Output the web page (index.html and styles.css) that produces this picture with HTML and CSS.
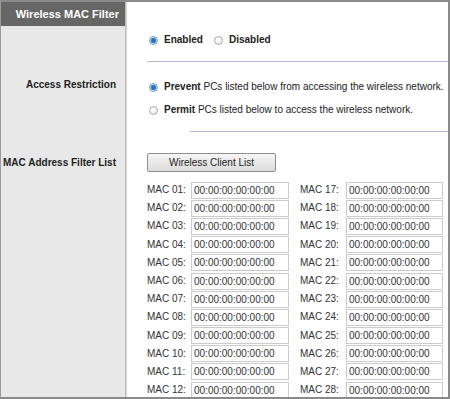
FILE: index.html
```html
<!DOCTYPE html>
<html lang="en">
<head>
  <meta charset="UTF-8" />
  <title>Wireless MAC Filter</title>
  <link rel="stylesheet" href="styles.css">
</head>
<body>
  <div class="frame">
    <div class="side">
      <div class="side-title">Wireless MAC Filter</div>
      <div class="side-label lbl-access">Access Restriction</div>
      <div class="side-label lbl-list">MAC Address Filter List</div>
    </div>

    <div class="main">
      <div class="row-enable">
        <label class="radio"><span class="dot on"></span><b>Enabled</b></label>
        <label class="radio"><span class="dot"></span><b>Disabled</b></label>
      </div>
      <hr class="line line-a">

      <div class="row-access">
        <label class="radio"><span class="dot on"></span><b>Prevent</b>&nbsp;PCs listed below from accessing the wireless network.</label>
        <label class="radio"><span class="dot"></span><b>Permit</b>&nbsp;PCs listed below to access the wireless network.</label>
      </div>
      <hr class="line line-b">

      <button class="client-btn">Wireless Client List</button>

      <div class="mac-grid" id="macGrid"></div>
    </div>
  </div>

  <script>
    const grid = document.getElementById('macGrid');
    function pad(n) { return n < 10 ? '0' + n : '' + n; }
    for (let i = 1; i <= 12; i++) {
      [i, i + 16].forEach(n => {
        const lab = document.createElement('span');
        lab.className = 'mac-label';
        lab.textContent = 'MAC ' + pad(n) + ':';
        const inp = document.createElement('input');
        inp.className = 'mac-input';
        inp.value = '00:00:00:00:00:00';
        grid.appendChild(lab);
        grid.appendChild(inp);
      });
    }
  </script>
</body>
</html>
```

FILE: styles.css
```css
* {
  box-sizing: border-box;
}
body {
  margin: 0;
  font-family: 'Liberation Sans', Arial, sans-serif;
  font-size: 10px;
  line-height: 12px;
  color: #222;
}
.frame {
  width: 450px;
  height: 399px;
  display: flex;
  border-top: 2px solid #8a8a8a;
  border-right: 2px solid #8a8a8a;
  border-bottom: 2px solid #8a8a8a;
  border-left: 1px solid #9a9a9a;
  overflow: hidden;
  background: #fff;
}
.side {
  width: 125px;
  flex: none;
  background: #e8e8e8;
  border-right: 1px solid #bdbdbd;
  box-shadow: 1px 0 1px #d8d8d8;
}
.side-title {
  background: #666;
  color: #fff;
  font-weight: bold;
  font-size: 11px;
  height: 24px;
  line-height: 24px;
  text-align: right;
  padding-right: 6px;
}
.side-label {
  font-weight: bold;
  text-align: right;
  white-space: nowrap;
  padding-right: 9px;
}
.lbl-access {
  margin-top: 53px;
}
.lbl-list {
  margin-top: 66px;
}
.main {
  flex: 1;
  padding: 0 0 0 21px;
}
.radio {
  display: flex;
  align-items: center;
  white-space: nowrap;
}
.dot {
  width: 9px;
  height: 9px;
  border-radius: 50%;
  border: 1px solid #a8a8a8;
  background: radial-gradient(circle at 40% 35%, #fff, #e4e4e4);
  margin: 0 6px 0 2px;
  flex: none;
}
.dot.on {
  border-color: #7a9ab8;
  background: radial-gradient(circle at 50% 50%, #2b6fb3 0 2px, #bcd4ea 3px, #fff 5px);
}
.row-enable {
  display: flex;
  align-items: flex-start;
  gap: 9px;
  padding-top: 32px;
  height: 59px;
}
.line {
  border: none;
  border-top: 1px solid #b4b4dc;
  margin: 0;
}
.line-b {
  margin-left: 43px;
}
.row-access {
  display: flex;
  flex-direction: column;
  gap: 11px;
  padding: 19px 0 15px;
}
.client-btn {
  display: block;
  margin-top: 21px;
  width: 129px;
  height: 19px;
  font-family: inherit;
  font-size: 10px;
  color: #222;
  border: 1px solid #8e8e8e;
  border-radius: 2px;
  background: linear-gradient(#f6f6f6, #dcdcdc);
  padding: 0;
}
.mac-grid {
  display: grid;
  grid-template-columns: 44px 98px 57px 97px;
  grid-auto-rows: 18.2px;
  margin-top: 9px;
  align-items: center;
}
.mac-label {
  color: #333;
}
.mac-input {
  height: 17px;
  width: 100%;
  border: 1px solid #ccc;
  padding: 0 0 0 2px;
  font-family: inherit;
  font-size: 10px;
  color: #333;
}
.mac-label:nth-child(4n+3) {
  padding-left: 11px;
}
```
